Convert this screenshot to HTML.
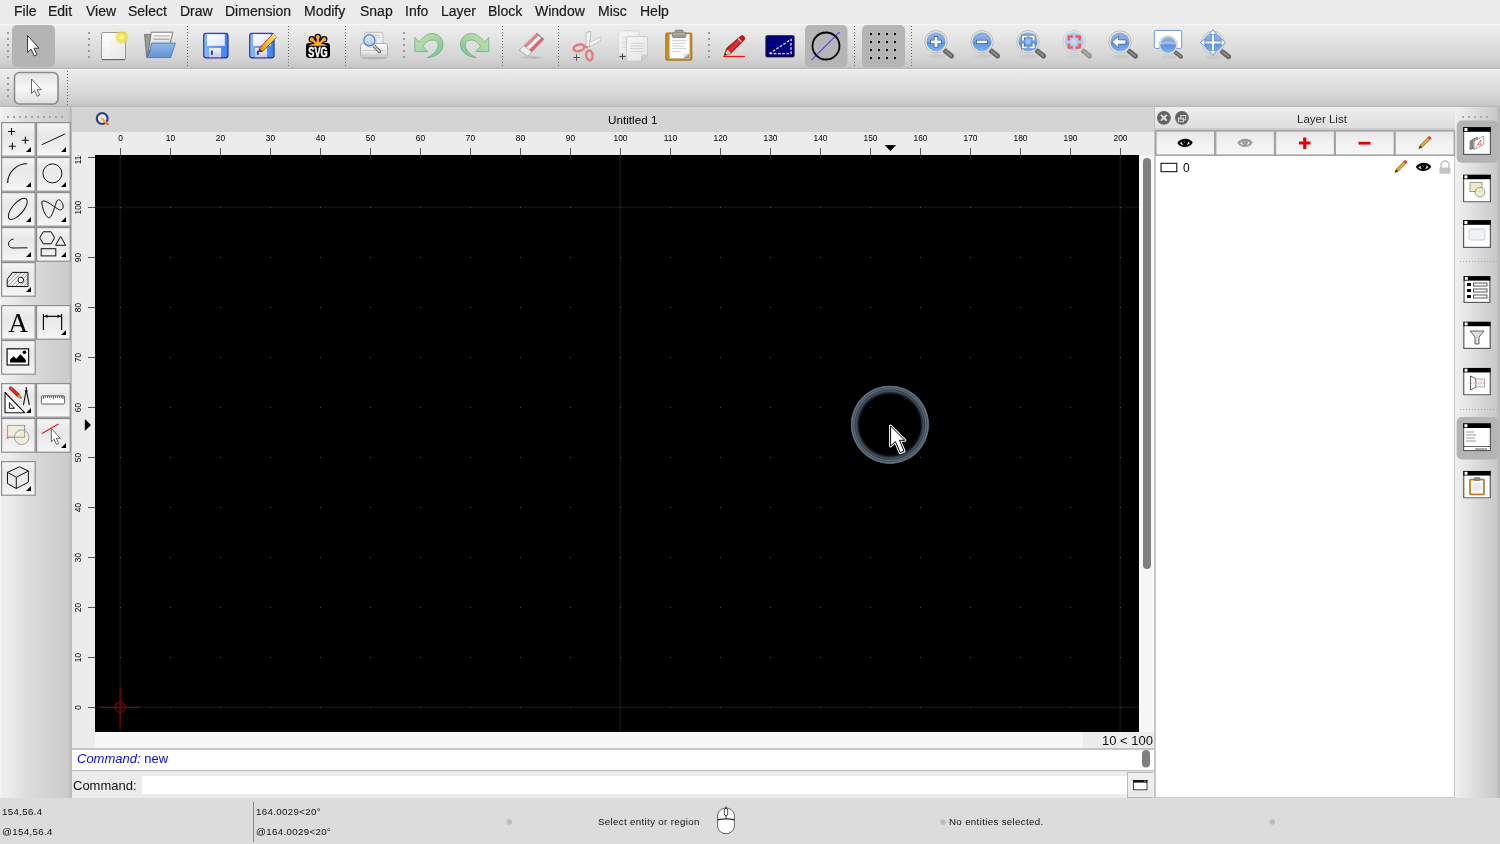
<!DOCTYPE html>
<html><head><meta charset="utf-8">
<style>
*{margin:0;padding:0;box-sizing:border-box}
html,body{width:1500px;height:844px;overflow:hidden;background:#ececec;font-family:"Liberation Sans",sans-serif;color:#111;-webkit-font-smoothing:antialiased}
body{will-change:transform}
.a{position:absolute}
#menubar{left:0;top:0;width:1500px;height:24px;background:#ebebeb}
#menubar span{position:absolute;top:3px;font-size:14px;color:#1a1a1a;line-height:16px;-webkit-text-stroke:0.2px #1a1a1a}
#tb1{left:0;top:24px;width:1500px;height:44.5px;background:linear-gradient(#ededed,#e6e6e6 25%,#d6d6d6 70%,#c9c9c9 95%,#b3b3b3);border-top:1px solid #f6f6f6}
#tb2{left:0;top:68.5px;width:1500px;height:38.8px;background:linear-gradient(#ebebeb,#e4e4e4 25%,#d4d4d4 70%,#c7c7c7 95%,#b3b3b3);border-top:1px solid #f6f6f6}
.vdots{position:absolute;width:0;border-left:2px dotted #8a8a8a}
.sep{position:absolute;width:0;border-left:1px dotted #777}
#leftdock{left:0;top:107px;width:72px;height:691.5px;background:linear-gradient(90deg,#f6f6f6,#eeeeee 3%,#ebebeb 15%,#dedede 35%,#d5d5d5 60%,#cbcbcb 96%,#bcbcbc 97%,#bcbcbc)}
#rightdock{left:1455px;top:107px;width:45px;height:691.5px;background:linear-gradient(90deg,#f0f0f0,#e4e4e4 30%,#d6d6d6 60%,#c9c9c9 93%,#bababa 95%,#bababa)}
#status{left:0;top:798px;width:1500px;height:46px;background:#dcdcdc}
#status span{position:absolute;font-size:9.7px;letter-spacing:0.35px;color:#111;line-height:12px}
</style></head><body>
<div id="menubar" class="a">
<span style="left:14px">File</span><span style="left:48px">Edit</span><span style="left:86px">View</span><span style="left:128px">Select</span><span style="left:180px">Draw</span><span style="left:225px">Dimension</span><span style="left:304px">Modify</span><span style="left:360px">Snap</span><span style="left:405px">Info</span><span style="left:441px">Layer</span><span style="left:488px">Block</span><span style="left:535px">Window</span><span style="left:598px">Misc</span><span style="left:640px">Help</span>
</div>
<div id="tb1" class="a"></div>
<div id="tb2" class="a"></div>
<svg class="a" style="left:0;top:0" width="1500" height="107">
<defs>
<linearGradient id="lensg" x1="0" y1="0" x2="0" y2="1"><stop offset="0" stop-color="#8fb2e2"/><stop offset="0.48" stop-color="#7ea6dc"/><stop offset="0.52" stop-color="#5b92dc"/><stop offset="1" stop-color="#7fb3ee"/></linearGradient>
<linearGradient id="lensf" x1="0" y1="0" x2="0" y2="1"><stop offset="0" stop-color="#dfe6f0"/><stop offset="1" stop-color="#c3d3ea"/></linearGradient>
<radialGradient id="glow"><stop offset="0" stop-color="#fffff0"/><stop offset="0.25" stop-color="#f8f070"/><stop offset="0.6" stop-color="#eee030" stop-opacity="0.85"/><stop offset="1" stop-color="#eee030" stop-opacity="0"/></radialGradient>
<linearGradient id="pageg" x1="0" y1="0" x2="1" y2="1"><stop offset="0" stop-color="#ffffff"/><stop offset="1" stop-color="#e6e6e6"/></linearGradient>
<linearGradient id="flop" x1="0" y1="0" x2="0" y2="1"><stop offset="0" stop-color="#6f9cf4"/><stop offset="1" stop-color="#3f72e6"/></linearGradient>
<linearGradient id="greenA" x1="0" y1="0" x2="1" y2="1"><stop offset="0" stop-color="#c2e3aa"/><stop offset="0.5" stop-color="#a6d6a0"/><stop offset="1" stop-color="#72bf8a"/></linearGradient>
<symbol id="mag" viewBox="0 0 30 30">
 <ellipse cx="13" cy="26.5" rx="9" ry="2.2" fill="#000" opacity="0.05"/>
 <path d="M21.3 21.2L27.6 26.2" stroke="#666865" stroke-width="5" stroke-linecap="round"/>
 <path d="M21.6 21.4L27.3 26" stroke="#8f918d" stroke-width="1.6" stroke-linecap="round"/>
 <circle cx="12" cy="12" r="11.2" fill="#ebeae4" stroke="#b9b8ae" stroke-width="0.9"/>
</symbol>
</defs>
<!-- handles -->
<g fill="#9a9a9a">
<rect x="7" y="32" width="2" height="2"/><rect x="7" y="38" width="2" height="2"/><rect x="7" y="44" width="2" height="2"/><rect x="7" y="50" width="2" height="2"/><rect x="7" y="56" width="2" height="2"/>
<rect x="88" y="32" width="2" height="2"/><rect x="88" y="38" width="2" height="2"/><rect x="88" y="44" width="2" height="2"/><rect x="88" y="50" width="2" height="2"/><rect x="88" y="56" width="2" height="2"/>
<rect x="403" y="32" width="2" height="2"/><rect x="403" y="38" width="2" height="2"/><rect x="403" y="44" width="2" height="2"/><rect x="403" y="50" width="2" height="2"/><rect x="403" y="56" width="2" height="2"/>
<rect x="708" y="32" width="2" height="2"/><rect x="708" y="38" width="2" height="2"/><rect x="708" y="44" width="2" height="2"/><rect x="708" y="50" width="2" height="2"/><rect x="708" y="56" width="2" height="2"/>
<rect x="7" y="77" width="2" height="2"/><rect x="7" y="83" width="2" height="2"/><rect x="7" y="89" width="2" height="2"/><rect x="7" y="95" width="2" height="2"/>
</g>
<!-- thin dotted separators -->
<g stroke="#6a6a6a" stroke-width="1" stroke-dasharray="1 2">
<path d="M187.5 26V66M288.5 26V66M345.5 26V66M502.5 26V66M558.5 26V66M854.5 26V66M911.5 26V66M67.5 71V105"/>
</g>
<!-- select (selected) -->
<rect x="12" y="25" width="43" height="42" rx="5" fill="#b4b4b4"/>
<path d="M27.5 35.5V52.5L31.2 49.2L34.2 56L37 54.7L34 48.2H39z" fill="#fff" stroke="#3a3a3a" stroke-width="1" stroke-linejoin="round"/>
<!-- tb2 select -->
<rect x="14.5" y="72.5" width="43.5" height="31.5" rx="5" fill="url(#tb2btn)" stroke="#8c8c8c" stroke-width="1.6"/>
<defs><linearGradient id="tb2btn" x1="0" y1="0" x2="0" y2="1"><stop offset="0" stop-color="#e4e4e4"/><stop offset="0.5" stop-color="#f8f8f8"/><stop offset="1" stop-color="#dedede"/></linearGradient></defs>
<path d="M31.5 79V93.5L34.6 90.6L37.2 96.2L39.6 95.1L37 89.7H41.2z" fill="#fff" stroke="#555" stroke-width="0.9" stroke-linejoin="round"/>
<!-- new -->
<rect x="101.5" y="32.5" width="24" height="27" rx="1.5" fill="url(#pageg)" stroke="#9a9a9a" stroke-width="1"/>
<path d="M102 59.6h23" stroke="#666" stroke-width="1.2"/><path d="M103.5 42.5h1M103.5 49.5h1" stroke="#aaa" stroke-width="0.6"/>
<circle cx="121.8" cy="37.2" r="7.5" fill="url(#glow)"/>
<!-- open -->
<defs><linearGradient id="fldB" x1="0" y1="0" x2="0" y2="1"><stop offset="0" stop-color="#94bbe6"/><stop offset="1" stop-color="#5f92d4"/></linearGradient>
<linearGradient id="papG" x1="0" y1="0" x2="0" y2="1"><stop offset="0" stop-color="#ffffff"/><stop offset="1" stop-color="#bdbdbd"/></linearGradient></defs>
<path d="M144.6 34.4H151.5L151 44L147.8 57H146.6z" fill="#9a9a9a" stroke="#6f6f6f" stroke-width="0.9" stroke-linejoin="round"/>
<path d="M151.3 32.2H172.8L170.2 43.5H152.5L147.6 56.2z" fill="url(#papG)" stroke="#6d6d6d" stroke-width="0.9" stroke-linejoin="round"/>
<path d="M154.2 35.9h15.5" stroke="#b5b5b5" stroke-width="1.2"/><path d="M153.5 39.2h16" stroke="#b0b0b0" stroke-width="1.5"/>
<path d="M151.7 43.1H175.4L170.6 57.6H146.8Q149.5 55 150 51z" fill="url(#fldB)" stroke="#4a7ac0" stroke-width="0.9" stroke-linejoin="round"/>
<!-- save -->
<defs>
<linearGradient id="flop2" x1="0" y1="0" x2="1" y2="0"><stop offset="0" stop-color="#8ab8ff"/><stop offset="0.5" stop-color="#5c9af8"/><stop offset="1" stop-color="#3b82f2"/></linearGradient>
<linearGradient id="lbl" x1="0" y1="0" x2="1" y2="1"><stop offset="0" stop-color="#ffffff"/><stop offset="1" stop-color="#dfe4f8"/></linearGradient>
<linearGradient id="shut" x1="0" y1="0" x2="0" y2="1"><stop offset="0" stop-color="#f2f2f6"/><stop offset="1" stop-color="#c9c9d6"/></linearGradient>
<linearGradient id="penO" x1="0" y1="0" x2="1" y2="0"><stop offset="0" stop-color="#f07a10"/><stop offset="0.5" stop-color="#ffc820"/><stop offset="1" stop-color="#ffe890"/></linearGradient>
</defs>
<g id="flp">
<rect x="203.7" y="33.3" width="24.3" height="24.6" rx="2.6" fill="url(#flop2)" stroke="#2626a0" stroke-width="1.1"/>
<rect x="207" y="34.2" width="17.8" height="11.6" fill="url(#lbl)"/>
<rect x="209" y="48.1" width="12" height="9.2" fill="url(#shut)"/>
<rect x="210.9" y="50.6" width="1.9" height="4.2" fill="#1133dd"/>
</g>
<use href="#flp" x="46"/>
<path d="M273.2 33.8l3.4 3.4l-14 14.3l-3.4 0.2l0.2-3.5z" fill="url(#penO)" stroke="#a02010" stroke-width="0.8" stroke-linejoin="round"/>
<path d="M272.7 34.3l3.4 3.4" stroke="#f4e0c0" stroke-width="1.6"/>
<path d="M259.4 51.6l0.5-2.6l2.2 2.2z" fill="#222"/>
<!-- SVG logo -->
<g stroke="#000" stroke-width="4.6" stroke-linecap="round" fill="none">
<path d="M317.8 45V37M317.8 45L311.9 39.3M317.8 45L324.1 39.3"/>
</g>
<g fill="#000"><circle cx="317.8" cy="37" r="3.3"/><circle cx="311.9" cy="39.3" r="3.3"/><circle cx="324.1" cy="39.3" r="3.3"/></g>
<rect x="306" y="42.9" width="24" height="15" rx="3.2" fill="#000"/>
<g stroke="#f7a930" stroke-width="2.4" stroke-linecap="round" fill="none">
<path d="M317.8 45V37.5M317.8 45L312.3 39.8M317.8 45L323.6 39.8"/>
</g>
<g fill="#f7a930"><circle cx="317.8" cy="37.1" r="2.1"/><circle cx="311.9" cy="39.4" r="2.1"/><circle cx="324.1" cy="39.4" r="2.1"/></g>
<path d="M308 45.8Q313 43.2 317.8 43.5Q322.6 43.2 328 45.8z" fill="#f7a930"/>
<text transform="translate(318 57.1) scale(0.64 1)" text-anchor="middle" font-family="Liberation Sans" font-weight="bold" font-size="14.3" fill="#fff" stroke="#fff" stroke-width="0.5">SVG</text>
<!-- print preview -->
<defs><linearGradient id="prB" x1="0" y1="0" x2="0" y2="1"><stop offset="0" stop-color="#fbfbfb"/><stop offset="0.6" stop-color="#e8e8e8"/><stop offset="1" stop-color="#d2d2d2"/></linearGradient>
<linearGradient id="lensP" x1="0" y1="0" x2="0" y2="1"><stop offset="0" stop-color="#dbe8f6"/><stop offset="0.5" stop-color="#c8daf0"/><stop offset="1" stop-color="#a9c2e2"/></linearGradient></defs>
<ellipse cx="374" cy="57.8" rx="12.5" ry="1.6" fill="#000" opacity="0.15"/>
<rect x="364.5" y="32.3" width="18.5" height="16" rx="1" fill="#ececec" stroke="#b8b8b8" stroke-width="0.8"/>
<path d="M370 35.5h10M370 37.5h10" stroke="#c9c9c9" stroke-width="0.8"/>
<rect x="360.5" y="43.5" width="27" height="14" rx="2.5" fill="url(#prB)" stroke="#a5a5a5" stroke-width="0.9"/>
<path d="M362.5 50.5h23" stroke="#c4c4c4" stroke-width="0.8"/>
<rect x="361" y="54.5" width="26" height="2.8" fill="#cfcfcf"/>
<path d="M373.5 45.5l6 6" stroke="#6b6b6b" stroke-width="3.4" stroke-linecap="round"/>
<path d="M373.8 45.8l5.4 5.4" stroke="#cdcdcd" stroke-width="1.6" stroke-linecap="round"/>
<circle cx="369.4" cy="40.5" r="6.9" fill="#f4f4f4" stroke="#c4c4c4" stroke-width="0.7"/>
<circle cx="369.4" cy="40.5" r="5.6" fill="url(#lensP)" stroke="#3f7bcc" stroke-width="1.1"/>
<!-- undo -->
<g id="undoI">
<path d="M414.8 37.3L418.7 42.1C423 37.5 427 33.6 432 33.6C438.5 33.6 443 38.5 443 44.5C443 51.5 436.5 57 427.3 57.6C434 54.5 438.3 49.5 438.3 45C438.3 42 436 40.1 432 40.1C428 40.1 425 43.5 422.9 46.3L427.7 51.6H414.8Z" fill="url(#greenA)" stroke="#69ad80" stroke-width="0.8" stroke-linejoin="miter"/>
</g>
<use href="#undoI" transform="translate(903.5 0) scale(-1 1)"/>
<!-- eraser -->
<ellipse cx="530" cy="57.3" rx="9" ry="1.3" fill="#000" opacity="0.1"/><ellipse cx="537" cy="57.8" rx="6" ry="1" fill="#000" opacity="0.06"/>
<path d="M536.50 33.30 L539.00 35.40 L526.42 47.76 L523.70 45.66z" fill="#e08585"/>
<path d="M539.00 35.40 L541.50 37.50 L529.14 49.86 L526.42 47.76z" fill="#f2f2f2"/>
<path d="M541.50 37.50 L544.00 39.60 L531.86 51.96 L529.14 49.86z" fill="#d86a6e"/>
<path d="M523.70 45.66 L531.86 51.96 L527.60 56.30 L519.20 50.00z" fill="#f0f0f0" stroke="#9a9a9a" stroke-width="0.6"/>
<path d="M536.50 33.30 L544.00 39.60 L527.60 56.30 L519.20 50.00z" fill="none" stroke="#c0a0a0" stroke-width="0.5"/>
<path d="M536.50 33.30L544.00 39.60" stroke="#8d8d8d" stroke-width="1.2"/>
<!-- scissors -->
<path d="M586.3 32.5L590.7 31.3L589.6 46.8L585.8 45.6z" fill="#f4f4f4" stroke="#9a9a9a" stroke-width="0.6" stroke-linejoin="round"/>
<path d="M589.6 42.5L600.6 37.2L601 40.3L589.6 46.8z" fill="#f4f4f4" stroke="#9a9a9a" stroke-width="0.6" stroke-linejoin="round" stroke-dasharray="1.2 0.5"/>
<ellipse cx="579" cy="47.9" rx="5.4" ry="3.2" transform="rotate(-14 579 47.9)" fill="none" stroke="#e07c80" stroke-width="2.5"/>
<ellipse cx="589.4" cy="55.4" rx="3.2" ry="4.9" transform="rotate(-6 589.4 55.4)" fill="none" stroke="#e07c80" stroke-width="2.5"/>
<path d="M584 46.5L588 47.5" stroke="#e07c80" stroke-width="2.2"/>
<path d="M573.3 57.5h6.6M576.5 54.3v6.6" stroke="#555" stroke-width="1"/>
<!-- copy -->
<defs><linearGradient id="pgC" x1="0" y1="0" x2="1" y2="1"><stop offset="0" stop-color="#f7f7f7"/><stop offset="1" stop-color="#e4e4e4"/></linearGradient>
<linearGradient id="clipG" x1="0" y1="0" x2="0" y2="1"><stop offset="0" stop-color="#b9b9ae"/><stop offset="1" stop-color="#8e8e84"/></linearGradient></defs>
<rect x="618.8" y="30.8" width="20.5" height="24.2" rx="1.5" fill="url(#pgC)" stroke="#cfcfcf" stroke-width="0.8"/>
<path d="M622 37.5h5M622 40h5M622 42.5h5M622 45h5M622 47.5h5" stroke="#d2d2d2" stroke-width="0.8"/>
<path d="M628 36.6h18.2q1.3 0 1.3 1.3v17.3l-6 6h-13.5q-1.3 0-1.3-1.3v-22q0-1.3 1.3-1.3z" fill="url(#pgC)" stroke="#c2c2c2" stroke-width="0.8"/>
<path d="M641.5 61.2v-4.4q0-1.6 1.6-1.6h4.4z" fill="#cfcfcf" stroke="#b5b5b5" stroke-width="0.6"/>
<path d="M630.8 43.4h14M630.8 46h14M630.8 48.5h12.5M630.8 51.5h14" stroke="#cacaca" stroke-width="0.8"/>
<path d="M619.4 56.5h6.2M622.5 53.4v6.2" stroke="#444" stroke-width="1"/>
<!-- paste -->
<rect x="665.7" y="32.9" width="26.2" height="27.4" rx="1.3" fill="#c98a25" stroke="#9a6312" stroke-width="0.7"/>
<path d="M669.6 34.3h19.9v24h-19.9z" fill="#fcfcfc" stroke="#d8d8d8" stroke-width="0.4"/>
<path d="M683 58.3l6.5-5v5z" fill="#9d9d9d"/><path d="M683 58.3l1-4.6l5.5-0.4z" fill="#e0e0e0"/>
<path d="M672.2 40.6h14M672.2 43.3h13.5M672.2 46h12M672.2 48.6h14M672.2 51.5h8.5" stroke="#c6c6c6" stroke-width="0.8"/>
<rect x="675.2" y="30.1" width="7.8" height="3.2" rx="0.6" fill="#a3a398" stroke="#6c6c64" stroke-width="0.6"/>
<rect x="672.4" y="32.3" width="13.4" height="5.2" rx="1.3" fill="url(#clipG)" stroke="#6c6c64" stroke-width="0.6"/>
<!-- pencil red -->
<path d="M723 56.4h22" stroke="#ff0000" stroke-width="1.1"/>
<path d="M740.3 36.5a2.6 2.6 0 0 1 3.7 3.7l-12.4 12.4l-4.3 1.6l-3 1l1-3l1.6-4.3z" fill="#d01020" stroke="#6a3a10" stroke-width="0.8" stroke-linejoin="round"/>
<path d="M739 38.5l2.4 2.4l-11.4 11.4l-2.4-2.4z" fill="#e04030" opacity="0.7"/>
<path d="M738.3 38.6l3 3" stroke="#cfcfcf" stroke-width="1.5"/>
<path d="M727.6 49.4l3.9 3.9l-4.2 1.4l-3 1l1-3z" fill="#f5d7a8" stroke="#6a3a10" stroke-width="0.5"/>
<path d="M724.4 55.4l0.8-2.4l1.6 1.6z" fill="#111"/>
<!-- dim blue -->
<rect x="765.9" y="35.7" width="28.2" height="21.2" rx="1" fill="#000080" stroke="#151515" stroke-width="0.9"/>
<path d="M769.4 53.6L791 39.4V53.6z" fill="none" stroke="#e6e6f2" stroke-width="1.3" stroke-dasharray="2.6 1.6"/>
<!-- circle selected -->
<rect x="805" y="25" width="42.5" height="42.5" rx="5" fill="#b5b5b5"/>
<circle cx="826" cy="46" r="13.5" fill="none" stroke="#000" stroke-width="1.8"/>
<path d="M811.5 60L839.5 32" stroke="#0a10ff" stroke-width="1"/>
<!-- grid selected -->
<rect x="862" y="25" width="43" height="42.5" rx="5" fill="#b5b5b5"/>
<g fill="#000">
<rect x="870" y="33" width="2" height="2"/><rect x="878" y="33" width="2" height="2"/><rect x="886" y="33" width="2" height="2"/><rect x="894" y="33" width="2" height="2"/>
<rect x="870" y="41" width="2" height="2"/><rect x="878" y="41" width="2" height="2"/><rect x="886" y="41" width="2" height="2"/><rect x="894" y="41" width="2" height="2"/>
<rect x="870" y="49" width="2" height="2"/><rect x="878" y="49" width="2" height="2"/><rect x="886" y="49" width="2" height="2"/><rect x="894" y="49" width="2" height="2"/>
<rect x="870" y="57" width="2" height="2"/><rect x="878" y="57" width="2" height="2"/><rect x="886" y="57" width="2" height="2"/><rect x="894" y="57" width="2" height="2"/>
</g>
<!-- zoom icons -->
<use href="#mag" x="924" y="29.8" width="30" height="30"/>
<circle cx="936" cy="41.8" r="9.6" fill="url(#lensg)"/>
<path d="M936 36.2v11.4M930.3 41.9h11.4" stroke="#2d5ca8" stroke-width="4.4"/><path d="M936 36.9v10M931 41.9h10" stroke="#fff" stroke-width="2.8"/>
<use href="#mag" x="970" y="29.8" width="30" height="30"/>
<circle cx="982" cy="41.8" r="9.6" fill="url(#lensg)"/>
<path d="M976.2 41.9h11.6" stroke="#2d5ca8" stroke-width="4.2"/><path d="M976.9 41.9h10.2" stroke="#fff" stroke-width="2.6"/>
<use href="#mag" x="1016" y="29.8" width="30" height="30"/>
<circle cx="1028" cy="41.8" r="9.6" fill="url(#lensg)"/>
<rect x="1025.5" y="39.3" width="5" height="5" fill="#a9c4ea" opacity="0.8"/>
<path d="M1022.8000000000001 40.6v-4.1h4.1M1029.5 36.5h4.1v4.1M1033.6000000000001 43.4v4.1h-4.1M1026.9 47.5h-4.1v-4.1" stroke="#2d5ca8" stroke-width="3.6" fill="none"/>
<path d="M1022.8000000000001 40.6v-4.1h4.1M1029.5 36.5h4.1v4.1M1033.6000000000001 43.4v4.1h-4.1M1026.9 47.5h-4.1v-4.1" stroke="#fff" stroke-width="2.2" fill="none"/>
<g opacity="0.6">
<use href="#mag" x="1062" y="29.8" width="30" height="30"/>
</g>
<circle cx="1074" cy="41.8" r="9.6" fill="#b2cbed"/>
<rect x="1071.5" y="39.3" width="5" height="5" fill="#c9daf2"/>
<path d="M1068.8 40.6v-4.1h4.1M1075.5 36.5h4.1v4.1M1079.6000000000001 43.4v4.1h-4.1M1072.9 47.5h-4.1v-4.1" stroke="#f05a5a" stroke-width="2.6" fill="none"/>
<use href="#mag" x="1108" y="30" width="30" height="30"/>
<circle cx="1120" cy="42" r="9.6" fill="url(#lensg)"/>
<path d="M1112.2 42L1118.6 36.2V39.9H1125.9V44.1H1118.6V47.8z" fill="#fff" stroke="#2d5ca8" stroke-width="0.7" stroke-linejoin="round"/>
<rect x="1154.3" y="30.4" width="27.4" height="18" rx="1.5" fill="#fff" stroke="#6e98d8" stroke-width="1"/>
<g transform="translate(1158.3 35.2) scale(0.82)"><use href="#mag" x="0" y="0" width="30" height="30"/></g>
<circle cx="1168.1" cy="45" r="7.9" fill="url(#lensg)"/>
<path d="M1161 43.5q7-3 14 0" stroke="#cfe0f6" stroke-width="1" fill="none" opacity="0.7"/>
<use href="#mag" x="1201" y="30.5" width="30" height="30"/>
<circle cx="1213" cy="42.5" r="9.6" fill="url(#lensg)"/>
<path d="M1213 33v19M1203.5 42.5h19" stroke="#4f86d6" stroke-width="3.6"/>
<path d="M1213 33v19M1203.5 42.5h19" stroke="#fff" stroke-width="2.2"/>
<path d="M1213 29.8l-3.6 4.6h7.2zM1213 55.2l-3.6-4.6h7.2zM1200.3 42.5l4.6-3.6v7.2zM1225.7 42.5l-4.6-3.6v7.2z" fill="#fff" stroke="#4f86d6" stroke-width="0.8" stroke-linejoin="round"/>
</svg>

<div id="leftdock" class="a"></div>
<svg class="a" style="left:0;top:107px" width="72" height="400" viewBox="0 107 72 400">
<defs>
<linearGradient id="btng" x1="0" y1="0" x2="0" y2="1"><stop offset="0" stop-color="#f6f6f6"/><stop offset="0.35" stop-color="#e8e8e8"/><stop offset="0.7" stop-color="#eeeeee"/><stop offset="1" stop-color="#f7f7f7"/></linearGradient>
<symbol id="tri" viewBox="0 0 6 6"><path d="M0.6 5.4H5.4V0.6z" fill="#000"/></symbol>
</defs>
<g fill="#a3a3a3"><rect x="7" y="116" width="2" height="2"/><rect x="13" y="116" width="2" height="2"/><rect x="19" y="116" width="2" height="2"/><rect x="25" y="116" width="2" height="2"/><rect x="31" y="116" width="2" height="2"/><rect x="37" y="116" width="2" height="2"/><rect x="43" y="116" width="2" height="2"/><rect x="49" y="116" width="2" height="2"/><rect x="55" y="116" width="2" height="2"/><rect x="61" y="116" width="2" height="2"/></g>
<g fill="url(#btng)" stroke="#8e8e8e" stroke-width="1.2">
<rect x="1.6" y="122.6" width="33.6" height="33.6"/><rect x="36.6" y="122.6" width="33.6" height="33.6"/>
<rect x="1.6" y="157.6" width="33.6" height="33.6"/><rect x="36.6" y="157.6" width="33.6" height="33.6"/>
<rect x="1.6" y="192.6" width="33.6" height="33.6"/><rect x="36.6" y="192.6" width="33.6" height="33.6"/>
<rect x="1.6" y="227.6" width="33.6" height="33.6"/><rect x="36.6" y="227.6" width="33.6" height="33.6"/>
<rect x="1.6" y="262.6" width="33.6" height="33.6"/>
<rect x="1.6" y="305.6" width="33.6" height="33.6"/><rect x="36.6" y="305.6" width="33.6" height="33.6"/>
<rect x="1.6" y="340.6" width="33.6" height="33.6"/>
<rect x="1.6" y="383.6" width="33.6" height="33.6"/><rect x="36.6" y="383.6" width="33.6" height="33.6"/>
<rect x="1.6" y="418.6" width="33.6" height="33.6"/><rect x="36.6" y="418.6" width="33.6" height="33.6"/>
<rect x="1.6" y="461.6" width="33.6" height="33.6"/>
</g>
<g fill="#000">
<path d="M26 152H31V147z"/><path d="M61 152H66V147z"/>
<path d="M26 187H31V182z"/><path d="M61 187H66V182z"/>
<path d="M26 222H31V217z"/><path d="M61 222H66V217z"/>
<path d="M26 257H31V252z"/><path d="M61 257H66V252z"/>
<path d="M26 292H31V287z"/>
<path d="M61 335H66V330z"/>
<path d="M26 413H31V408z"/>
<path d="M61 448H66V443z"/>
<path d="M26 491H31V486z"/>
</g>
<g stroke="#111" fill="none" stroke-width="1.1">
<!-- points -->
<path d="M8 131.5h7M11.5 128v7M21.8 140.2h7M25.3 136.7v7M8.8 146.2h7M12.3 142.7v7"/>
<!-- line -->
<path d="M41.8 144.7L64.9 134" stroke-width="1"/>
<!-- arc -->
<path d="M7.6 183A19.5 19.5 0 0 1 27.2 163.8" stroke-width="1.1"/>
<!-- circle -->
<circle cx="52.4" cy="173.4" r="9.5" stroke-width="1"/>
<!-- ellipse -->
<ellipse cx="17.8" cy="208.8" rx="13" ry="5.6" transform="rotate(-50 17.8 208.8)" stroke-width="1"/>
<!-- spline -->
<path d="M41.8 201.6C42 208 45 216 48.5 217.8C52 219.5 55.5 203 57 200.8C58.5 198.6 61.5 200 63 205C63.8 208 62 210.5 59.5 209.8C56 209 45 198 41.8 201.6z" stroke-width="1"/>
<!-- polyline hook -->
<path d="M13.5 239C10 239.5 8.5 242 8.5 244C8.5 246.5 10.5 248 13 248L27.5 247.8" stroke-width="1"/>
<!-- shapes -->
<path d="M43.2 231.8h8l3.4 6l-3.4 6h-8l-3.4-6z" stroke-width="1"/>
<path d="M60.6 236.3l5 9h-10z" stroke-width="1"/>
<rect x="41.2" y="248.7" width="14.6" height="7.2" stroke-width="1"/>
</g>
<!-- hatch -->
<clipPath id="hclip"><path d="M7.2 279.3L12.4 272.4H28V286.5H7.2z"/></clipPath>
<g clip-path="url(#hclip)" stroke="#777" stroke-width="0.6"><path d="M2 288l16-16M6 288l16-16M10 288l16-16M14 288l16-16M18 288l16-16M22 288l16-16M26 288l16-16M-2 288l16-16"/></g>
<path d="M7.2 279.3L12.4 272.4H28V286.5H7.2z" fill="none" stroke="#111" stroke-width="1"/>
<circle cx="20.8" cy="280" r="2.8" fill="#f3f3f3" stroke="#111" stroke-width="0.9"/>
<!-- A -->
<text x="18.2" y="331.8" text-anchor="middle" font-family="Liberation Serif" font-size="27.5" fill="#000">A</text>
<!-- dimension -->
<path d="M43.4 314V330M61.6 314V330M44 316.3H61" stroke="#111" stroke-width="1.2" fill="none"/>
<path d="M44 316.3l3.5-1.8v3.6zM61 316.3l-3.5-1.8v3.6z" fill="#111"/>
<!-- image -->
<rect x="7.1" y="348.8" width="21.5" height="16.2" fill="#fff" stroke="#222" stroke-width="1.3"/>
<path d="M10 362.5L10 359.8L13.5 356.2L16.3 358.8L20.4 354.3L25.8 359.8V362.5z" fill="#000"/>
<circle cx="24.4" cy="352.3" r="1.8" fill="#000"/>
<!-- drafting -->
<path d="M5 392.5V412.7H24.6z" fill="#fff" stroke="#111" stroke-width="1.1" stroke-linejoin="round"/>
<path d="M9.4 402.6V408.3H14.5z" fill="none" stroke="#111" stroke-width="1"/>
<path d="M10.8 388.2l7.6 7.2" stroke="#7a2010" stroke-width="3.6" stroke-linecap="round"/><path d="M10.8 388.2l7.6 7.2" stroke="#e02a20" stroke-width="2.4" stroke-linecap="round"/><path d="M18.2 395.2l2.6 2.5" stroke="#c89050" stroke-width="2.6"/><path d="M20.6 397.5l0.8 0.7" stroke="#222" stroke-width="1.2"/><path d="M11 387.6l1.6 1.4" stroke="#f4a0a0" stroke-width="0.8"/>
<path d="M26.3 387V390M26.3 390L23.4 405.2M26.3 390L29.4 405.2" stroke="#111" stroke-width="1.1" fill="none"/>
<circle cx="26.3" cy="391" r="1.3" fill="#111"/>
<!-- ruler -->
<rect x="41.4" y="395.8" width="23.2" height="8.2" rx="1.2" fill="#fff" stroke="#555" stroke-width="0.9"/>
<path d="M43.6 396v3M45.6 396v2M47.6 396v2M49.6 396v2M51.6 396v2M53.6 396v3.2M55.6 396v2M57.6 396v2M59.6 396v2M61.6 396v2M63 396v3" stroke="#333" stroke-width="0.8"/>
<!-- info -->
<rect x="7.6" y="425.4" width="17" height="11.8" fill="#f1ecd6" stroke="#999" stroke-width="0.9"/>
<circle cx="21.7" cy="437.2" r="7.3" fill="#f1ecd6" fill-opacity="0.85" stroke="#999" stroke-width="0.9"/>
<path d="M7.6 437.2h17M24.6 425.4v11.8" stroke="#999" stroke-width="0.9"/>
<circle cx="7.6" cy="437.8" r="1.2" fill="#f07878"/>
<!-- select with red line -->
<path d="M41.9 433.6L58.5 424" stroke="#f01818" stroke-width="1.2"/>
<path d="M51.3 428.4V441.8L54.1 439.2L56.4 444.4L58.6 443.4L56.3 438.3H60.2z" fill="#fff" stroke="#555" stroke-width="0.9" stroke-linejoin="round"/>
<!-- cube -->
<path d="M7.5 472.3L19.5 466.8L28.4 471V482.2L16.3 488.5L7.5 483.6z M7.5 472.3L16.3 477.3L28.4 471 M16.3 477.3V488.5" fill="none" stroke="#111" stroke-width="1" stroke-linejoin="round"/>
</svg>


<!-- drawing window -->
<div class="a" style="left:72px;top:107px;width:1082px;height:25px;background:#d4d4d4"></div>
<div class="a" style="left:72px;top:132px;width:1082px;height:600px;background:#ececec"></div>
<svg class="a" style="left:92px;top:109px" width="20" height="20" viewBox="92 109 20 20">
<circle cx="102.2" cy="118.5" r="5.4" fill="#f4f4f8" stroke="#2b3f8e" stroke-width="2.2"/>
<path d="M99.5 118.5h5M102 116v5" stroke="#c8a0a8" stroke-width="0.6"/>
<path d="M102.6 119.4l4.6 4.4" stroke="#f3b21c" stroke-width="2.2" stroke-linecap="round"/>
<path d="M106.6 123.2l1.2 1.1" stroke="#e86464" stroke-width="2.2" stroke-linecap="round"/>
</svg>
<div class="a" style="left:608px;top:112.5px;font-size:11.7px;color:#000;line-height:14px">Untitled 1</div>
<div class="a" style="left:95px;top:155px;width:1044px;height:577px;background:#000"></div>
<svg class="a" style="left:0;top:0" width="1500" height="844">
<defs><pattern id="gd" x="120" y="157" width="50" height="50" patternUnits="userSpaceOnUse"><rect width="1" height="1" fill="#4a4a4a"/></pattern></defs>
<clipPath id="lrc"><rect x="72" y="155" width="23" height="577"/></clipPath>
<path d="M120.5 148V155M170.5 148V155M220.5 148V155M270.5 148V155M320.5 148V155M370.5 148V155M420.5 148V155M470.5 148V155M520.5 148V155M570.5 148V155M620.5 148V155M670.5 148V155M720.5 148V155M770.5 148V155M820.5 148V155M870.5 148V155M920.5 148V155M970.5 148V155M1020.5 148V155M1070.5 148V155M1120.5 148V155M88 707.5H95M88 657.5H95M88 607.5H95M88 557.5H95M88 507.5H95M88 457.5H95M88 407.5H95M88 357.5H95M88 307.5H95M88 257.5H95M88 207.5H95M88 157.5H95" stroke="#555" stroke-width="1"/>
<g font-family="Liberation Sans" font-size="9.4" fill="#000"><text transform="translate(120.5 141) scale(0.89 1)" text-anchor="middle">0</text><text transform="translate(170.5 141) scale(0.89 1)" text-anchor="middle">10</text><text transform="translate(220.5 141) scale(0.89 1)" text-anchor="middle">20</text><text transform="translate(270.5 141) scale(0.89 1)" text-anchor="middle">30</text><text transform="translate(320.5 141) scale(0.89 1)" text-anchor="middle">40</text><text transform="translate(370.5 141) scale(0.89 1)" text-anchor="middle">50</text><text transform="translate(420.5 141) scale(0.89 1)" text-anchor="middle">60</text><text transform="translate(470.5 141) scale(0.89 1)" text-anchor="middle">70</text><text transform="translate(520.5 141) scale(0.89 1)" text-anchor="middle">80</text><text transform="translate(570.5 141) scale(0.89 1)" text-anchor="middle">90</text><text transform="translate(620.5 141) scale(0.89 1)" text-anchor="middle">100</text><text transform="translate(670.5 141) scale(0.89 1)" text-anchor="middle">110</text><text transform="translate(720.5 141) scale(0.89 1)" text-anchor="middle">120</text><text transform="translate(770.5 141) scale(0.89 1)" text-anchor="middle">130</text><text transform="translate(820.5 141) scale(0.89 1)" text-anchor="middle">140</text><text transform="translate(870.5 141) scale(0.89 1)" text-anchor="middle">150</text><text transform="translate(920.5 141) scale(0.89 1)" text-anchor="middle">160</text><text transform="translate(970.5 141) scale(0.89 1)" text-anchor="middle">170</text><text transform="translate(1020.5 141) scale(0.89 1)" text-anchor="middle">180</text><text transform="translate(1070.5 141) scale(0.89 1)" text-anchor="middle">190</text><text transform="translate(1120.5 141) scale(0.89 1)" text-anchor="middle">200</text><g clip-path="url(#lrc)"><text transform="translate(81.2,707.5) rotate(-90) scale(0.89 1)" text-anchor="middle">0</text><text transform="translate(81.2,657.5) rotate(-90) scale(0.89 1)" text-anchor="middle">10</text><text transform="translate(81.2,607.5) rotate(-90) scale(0.89 1)" text-anchor="middle">20</text><text transform="translate(81.2,557.5) rotate(-90) scale(0.89 1)" text-anchor="middle">30</text><text transform="translate(81.2,507.5) rotate(-90) scale(0.89 1)" text-anchor="middle">40</text><text transform="translate(81.2,457.5) rotate(-90) scale(0.89 1)" text-anchor="middle">50</text><text transform="translate(81.2,407.5) rotate(-90) scale(0.89 1)" text-anchor="middle">60</text><text transform="translate(81.2,357.5) rotate(-90) scale(0.89 1)" text-anchor="middle">70</text><text transform="translate(81.2,307.5) rotate(-90) scale(0.89 1)" text-anchor="middle">80</text><text transform="translate(81.2,257.5) rotate(-90) scale(0.89 1)" text-anchor="middle">90</text><text transform="translate(81.2,207.5) rotate(-90) scale(0.89 1)" text-anchor="middle">100</text><text transform="translate(81.2,157.5) rotate(-90) scale(0.89 1)" text-anchor="middle">110</text></g></g>
<rect x="95" y="155" width="1044" height="577" fill="url(#gd)"/>
<g fill="#101010"><rect x="95" y="206.3" width="1044" height="2"/><rect x="95" y="706.3" width="1044" height="2"/><rect x="119.2" y="155" width="2" height="577"/><rect x="619.2" y="155" width="2" height="577"/><rect x="1119.2" y="155" width="2" height="577"/></g><rect x="95" y="155" width="1044" height="577" fill="url(#gd)"/>
<g stroke="#7c0606" fill="none" stroke-width="1.2"><path d="M100 707.3H140M120.2 687V727"/><circle cx="120.2" cy="707.3" r="5"/></g>
<path d="M884.6 145h11.6l-5.8 6z" fill="#000"/>
<path d="M84.8 419v12.1l6.2-6.05z" fill="#000"/>
</svg>
<div class="a" style="left:1139px;top:155px;width:15px;height:577px;background:#f7f7f7"></div>
<div class="a" style="left:72px;top:732px;width:1082px;height:16px;background:#f7f7f7"></div><div class="a" style="left:1143px;top:158px;width:8px;height:411px;border-radius:4px;background:#808080"></div>
<svg class="a" style="left:840px;top:375px" width="100" height="100" viewBox="840 375 100 100">
<defs><radialGradient id="ring" cx="889.9" cy="424.7" r="39.5" gradientUnits="userSpaceOnUse">
<stop offset="0" stop-color="#000" stop-opacity="0"/><stop offset="0.74" stop-color="#000" stop-opacity="0"/>
<stop offset="0.80" stop-color="#161d24"/><stop offset="0.85" stop-color="#44535f"/><stop offset="0.88" stop-color="#33404b"/><stop offset="0.91" stop-color="#60707d"/><stop offset="0.935" stop-color="#3e4a56"/><stop offset="0.96" stop-color="#687885"/><stop offset="0.985" stop-color="#4a5864"/><stop offset="1" stop-color="#1a2026" stop-opacity="0.3"/></radialGradient></defs>
<circle cx="889.9" cy="424.7" r="39.5" fill="url(#ring)"/>
<path id="curP" d="M890.6 426V446L895.4 441.5L900.2 452.6L904 451L899.5 440.3H904.8z" fill="#fff" stroke="#fff" stroke-width="3" stroke-linejoin="round"/>
<path d="M890.6 426V446L895.4 441.5L900.2 452.6L904 451L899.5 440.3H904.8z" fill="#fff" stroke="#000" stroke-width="1" stroke-linejoin="round"/>
</svg>

<div class="a" style="left:72px;top:732px;width:23px;height:16px;background:#ececec"></div>
<div class="a" style="left:1083px;top:732px;width:71px;height:16px;background:#ececec"></div>
<div class="a" style="left:1086px;top:733px;width:67px;font-size:13px;text-align:right;color:#111">10 &lt; 100</div>
<div class="a" style="left:72px;top:748px;width:1082px;height:2px;background:#c6c6c6"></div>
<div class="a" style="left:72px;top:750px;width:1082px;height:20px;background:#fff"></div>
<div class="a" style="left:77px;top:750px;font-size:13px;font-style:italic;color:#0c0cd8;line-height:17px">Command: <span style="font-style:normal">new</span></div>
<div class="a" style="left:72px;top:770px;width:1082px;height:1px;background:#bdbdbd"></div><div class="a" style="left:72px;top:771px;width:1082px;height:1px;background:#e4e4e4"></div>
<div class="a" style="left:72px;top:772px;width:1082px;height:26px;background:#ececec"></div>
<div class="a" style="left:73px;top:777px;font-size:13px;color:#111;line-height:17px">Command:</div>
<div class="a" style="left:142px;top:776px;width:985px;height:18px;background:#fff"></div>
<div class="a" style="left:1127px;top:772px;width:26px;height:26px;background:linear-gradient(#f2f2f2,#e8e8e8);border:1px solid #b8b8b8;border-right:none"></div>
<svg class="a" style="left:1125px;top:745px" width="30" height="55" viewBox="1125 745 30 55">
<rect x="1133.5" y="780.5" width="13.5" height="9.3" fill="#fafafa" stroke="#333" stroke-width="0.9"/>
<rect x="1133" y="780" width="14.5" height="2.6" fill="#111"/>
<rect x="1144.5" y="780.6" width="1" height="1" fill="#fff"/>
<rect x="1142" y="750" width="8" height="17.5" rx="4" fill="#808080"/>
</svg>
<div class="a" style="left:1154px;top:107px;width:1px;height:691px;background:#c4c4c4"></div><div class="a" style="left:1155px;top:155px;width:1px;height:643px;background:#c9c9c9"></div>

<!-- layer dock -->
<div class="a" style="left:1155px;top:107.5px;width:300px;height:21px;background:linear-gradient(#ededed,#dedede)"></div><div class="a" style="left:1155px;top:128px;width:300px;height:2.3px;background:#cdcdcd"></div>
<div class="a" style="left:1297px;top:112px;font-size:11.5px;color:#2a2a2a;line-height:14px">Layer List</div>
<div class="a" style="left:1156px;top:155px;width:299px;height:643px;background:#fff"></div><div class="a" style="left:1454px;top:155px;width:1px;height:643px;background:#c9c9c9"></div><div class="a" style="left:1156px;top:797px;width:299px;height:1px;background:#cfcfcf"></div>

<div id="rightdock" class="a"></div>
<svg class="a" style="left:1154px;top:107px" width="346" height="420" viewBox="1154 107 346 420">
<defs>
<linearGradient id="lbtn" x1="0" y1="0" x2="0" y2="1"><stop offset="0" stop-color="#e6e6e6"/><stop offset="0.45" stop-color="#f2f2f2"/><stop offset="1" stop-color="#f6f6f6"/></linearGradient>
<symbol id="eye" viewBox="0 0 16 12"><path d="M0.3 6.3C2.5 1 13 0 15.7 5.8C13.5 11 3.5 12.2 0.3 6.3z" fill="#000"/><path d="M3 6.4C4.8 4 11 3.6 12.8 6.1C11 8.8 5 9.2 3 6.4z" fill="#fff"/><circle cx="8" cy="5.4" r="2.9" fill="#000"/><path d="M6.8 4.6l1.3 1.2" stroke="#fff" stroke-width="0.6"/></symbol>
<symbol id="pen" viewBox="0 0 14 14"><path d="M11.2 0.8l2 2l-9 9l-3.3 1.3l1.3-3.3z" fill="#e3a536" stroke="#7a5010" stroke-width="0.6" stroke-linejoin="round"/><path d="M11.2 0.8l2 2l-1.4 1.4l-2-2z" fill="#e0302a"/><path d="M0.9 13.1l1.3-3.3l2 2z" fill="#333"/></symbol>
<symbol id="win" viewBox="0 0 28 28"><rect x="0.6" y="0.6" width="26.8" height="26.8" fill="#fff" stroke="#5a5a5a" stroke-width="1.2"/><rect x="0.2" y="0.2" width="27.6" height="4.6" fill="#000"/><rect x="1.4" y="1" width="3" height="3" fill="#fff"/></symbol>
</defs>
<!-- title buttons -->
<circle cx="1163.9" cy="117.8" r="6.9" fill="#636363"/>
<path d="M1161 114.9l5.8 5.8M1166.8 114.9l-5.8 5.8" stroke="#e6e6e6" stroke-width="1.9"/>
<circle cx="1181.9" cy="117.8" r="6.9" fill="#636363"/>
<rect x="1180.9" y="115.5" width="4.8" height="4.4" fill="none" stroke="#e6e6e6" stroke-width="0.9"/>
<rect x="1178.3" y="118.1" width="5.1" height="3.7" fill="#636363" stroke="#e6e6e6" stroke-width="0.9"/>
<path d="M1178.6 119.2h4.6" stroke="#e6e6e6" stroke-width="0.6"/>
<!-- layer buttons -->
<g fill="url(#lbtn)" stroke="#a4a4a4" stroke-width="1.6">
<rect x="1155.8" y="130.8" width="59" height="24.4"/><rect x="1215.6" y="130.8" width="59" height="24.4"/><rect x="1275.4" y="130.8" width="59.2" height="24.4"/><rect x="1335.2" y="130.8" width="59.2" height="24.4"/><rect x="1395" y="130.8" width="59.4" height="24.4"/>
</g>
<use href="#eye" x="1177" y="136.8" width="16" height="12"/>
<use href="#eye" x="1237" y="136.8" width="16" height="12" opacity="0.35"/>
<path d="M1299 143h11.5M1304.75 137.5v11.5" stroke="#e80000" stroke-width="3.2"/>
<path d="M1358.5 143.2h12" stroke="#e80000" stroke-width="2.8"/>
<use href="#pen" x="1418" y="135.5" width="14" height="14"/>
<!-- layer row -->
<rect x="1161" y="163.3" width="15.8" height="8.4" fill="#fff" stroke="#000" stroke-width="1"/>
<text x="1183" y="171.6" font-family="Liberation Sans" font-size="12" fill="#000">0</text>
<use href="#pen" x="1394" y="159.5" width="14" height="14"/>
<use href="#eye" x="1415.5" y="160.8" width="16" height="12"/>
<path d="M1441 168v-3a4 4 0 0 1 8 0v3" fill="none" stroke="#bdbdbd" stroke-width="1.3"/>
<rect x="1439.5" y="167.5" width="11" height="6.3" rx="0.8" fill="#c4c4c4"/>
<!-- right dock -->
<g fill="#a9a9a9"><rect x="1462" y="116" width="2" height="2"/><rect x="1468" y="116" width="2" height="2"/><rect x="1474" y="116" width="2" height="2"/><rect x="1480" y="116" width="2" height="2"/><rect x="1486" y="116" width="2" height="2"/></g>
<rect x="1456.7" y="120.5" width="41.5" height="42.2" rx="5" fill="#b4b4b4"/>
<use href="#win" x="1463" y="127" width="28" height="28"/>
<path d="M1470.1 141.2l5-3v8.6l-5 3z" fill="#9a9a9a" stroke="#555" stroke-width="0.7"/>
<path d="M1472.2 140.2l5-3v8.6l-5 3z" fill="#b8b8b8" stroke="#555" stroke-width="0.7"/>
<path d="M1474.1 141l9.7-4.9v8.5l-9.7 5z" fill="#fff" stroke="#444" stroke-width="0.7" stroke-dasharray="1.2 0.6"/>
<path d="M1476.5 146.5l4.3-6.3l0.2 5.3M1478 144.3h2.6" fill="none" stroke="#f04848" stroke-width="0.8"/>
<use href="#win" x="1463" y="174.4" width="28" height="28"/>
<rect x="1470" y="182.5" width="12" height="9" fill="#f1ecc6" stroke="#888" stroke-width="0.8"/>
<circle cx="1480" cy="192" r="4.8" fill="#f1ecc6" fill-opacity="0.8" stroke="#888" stroke-width="0.8"/>
<use href="#win" x="1463" y="220" width="28" height="28"/>
<rect x="1469" y="229" width="16" height="11" rx="2" fill="#f2f2f2" stroke="#b5c8e6" stroke-width="0.9"/>
<g stroke="#a9a9a9" stroke-width="1" stroke-dasharray="1 2"><path d="M1460 261.5h38M1460 409.5h38"/></g>
<use href="#win" x="1463" y="276" width="28" height="27"/>
<g fill="#000"><rect x="1467" y="283" width="4" height="3"/><rect x="1467" y="289" width="4" height="3"/><rect x="1467" y="295" width="4" height="3"/></g>
<g fill="none" stroke="#333" stroke-width="0.8"><rect x="1473.5" y="283" width="13.5" height="3"/><rect x="1473.5" y="289" width="13.5" height="3"/><rect x="1473.5" y="295" width="13.5" height="3"/></g>
<use href="#win" x="1463" y="321.5" width="28" height="27.5"/>
<path d="M1470 331h14l-5 6v7h-4v-7z" fill="#ddd" stroke="#444" stroke-width="0.8" stroke-linejoin="round"/>
<use href="#win" x="1463" y="367.7" width="28" height="27.7"/>
<path d="M1470.5 376v14l5.5-3v-8z" fill="#fff" stroke="#333" stroke-width="0.8"/>
<rect x="1476" y="379" width="8.5" height="8" fill="#eee" stroke="#888" stroke-width="0.6"/>
<path d="M1468 383h18" stroke="#f08080" stroke-width="0.7" stroke-dasharray="1.5 1"/>
<rect x="1456.7" y="417" width="41.5" height="42.4" rx="5" fill="#b4b4b4"/>
<use href="#win" x="1463" y="423" width="28" height="28.4"/>
<g stroke="#555" stroke-width="0.6"><path d="M1466 432h8M1466 435h10M1466 438h9M1466 441h10"/></g>
<path d="M1464 446.5h26" stroke="#222" stroke-width="0.7"/>
<path d="M1475 449h12" stroke="#333" stroke-width="0.8"/>
<use href="#win" x="1463" y="470.8" width="28" height="27.7"/>
<rect x="1469.5" y="479" width="15" height="16" rx="1" fill="#c88a30" stroke="#885a1a" stroke-width="0.5"/>
<rect x="1471" y="480.5" width="12" height="13" fill="#fafafa"/>
<rect x="1474" y="477.5" width="6" height="3" rx="0.8" fill="#888" stroke="#555" stroke-width="0.4"/>
<path d="M1472.5 484h9M1472.5 486h9M1472.5 488h9M1472.5 490h7" stroke="#bbb" stroke-width="0.5"/>
</svg>

<div id="status" class="a">
<span style="left:2px;top:8px">154,56.4</span>
<span style="left:2px;top:28px">@154,56.4</span>
<span style="left:256px;top:8px">164.0029&lt;20°</span>
<span style="left:256px;top:28px">@164.0029&lt;20°</span>
<span style="left:598px;top:18px">Select entity or region</span>
<span style="left:949px;top:18px">No entities selected.</span>
</div>
<svg class="a" style="left:0;top:798px" width="1500" height="46" viewBox="0 798 1500 46">
<path d="M253.5 802V842" stroke="#8a8a8a" stroke-width="1"/>
<g fill="#bdbdbd"><circle cx="509.3" cy="822" r="2.8"/><circle cx="943" cy="822" r="2.8"/><circle cx="1272.3" cy="822" r="2.8"/></g>
<path d="M717.6 814.7A8.6 8.6 0 0 1 734.4 814.7V827A8.6 8.6 0 0 1 717.6 827z" fill="#fff" stroke="#555" stroke-width="0.9"/>
<path d="M717.6 819.8Q726 818 734.4 819.8" fill="none" stroke="#333" stroke-width="1.4"/>
<path d="M726 806.5V819" stroke="#333" stroke-width="1"/>
<rect x="724.3" y="808.4" width="3.4" height="7.2" rx="1.7" fill="#fff" stroke="#333" stroke-width="0.9"/>
</svg>
</body></html>
